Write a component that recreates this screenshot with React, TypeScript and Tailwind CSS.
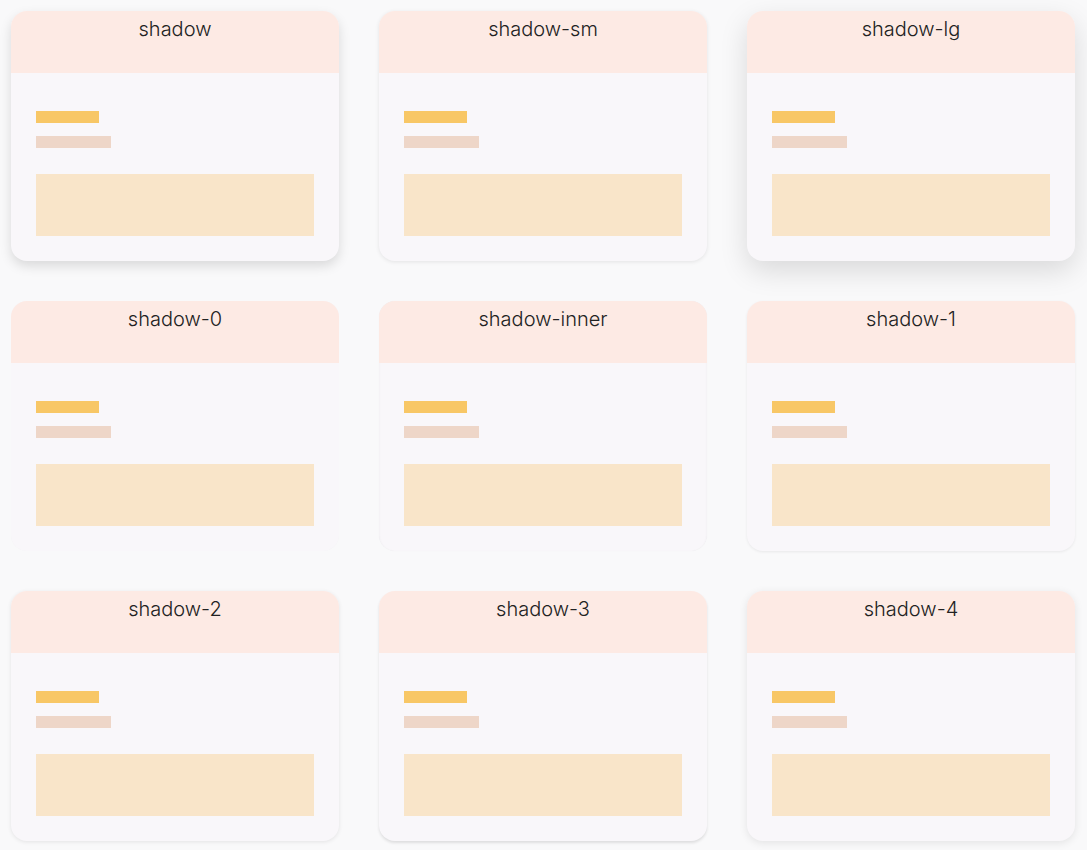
const cards = [
  { name: "shadow", shadow: "shadow-[0_5px_12px_rgba(0,0,0,0.13)]" },
  { name: "shadow-sm", shadow: "shadow-[0_1px_4px_rgba(0,0,0,0.09)]" },
  { name: "shadow-lg", shadow: "shadow-[0_10px_28px_rgba(0,0,0,0.13)]" },
  { name: "shadow-0", shadow: "shadow-[0_0_1px_rgba(0,0,0,0.03)]" },
  { name: "shadow-inner", shadow: "shadow-[inset_0_1px_3px_rgba(0,0,0,0.05),0_0_1px_rgba(0,0,0,0.06)]" },
  { name: "shadow-1", shadow: "shadow-[0_1px_3px_rgba(0,0,0,0.07)]" },
  { name: "shadow-2", shadow: "shadow-[0_1px_4px_rgba(0,0,0,0.09)]" },
  { name: "shadow-3", shadow: "shadow-[0_2px_3px_rgba(0,0,0,0.11)]" },
  { name: "shadow-4", shadow: "shadow-[0_2px_8px_rgba(0,0,0,0.09)]" },
];

function Card({ name, shadow }: { name: string; shadow: string }) {
  return (
    <div className={`h-[250px] rounded-2xl overflow-hidden bg-[#f9f7fa] flex flex-col ${shadow}`}>
      <div className="h-[62px] bg-[#fdeae4] text-center pt-[4px] text-[20px] leading-7 font-light text-[#222]">
        {name}
      </div>
      <div className="flex-1 px-[25px] pt-[38px]">
        <div className="w-[63px] h-[12px] bg-[#f8c766]" />
        <div className="w-[75px] h-[12px] bg-[#eed6c8] mt-[13px]" />
        <div className="h-[62px] bg-[#f9e5c9] mt-[26px]" />
      </div>
    </div>
  );
}

export default function App() {
  return (
    <div className="min-h-[850px] bg-[#f9f9fa] p-[11px] font-['Inter',sans-serif]">
      <div className="grid grid-cols-[328px_328px_328px] gap-x-[40px] gap-y-[40px]">
        {cards.map((c) => (
          <Card key={c.name} name={c.name} shadow={c.shadow} />
        ))}
      </div>
    </div>
  );
}
